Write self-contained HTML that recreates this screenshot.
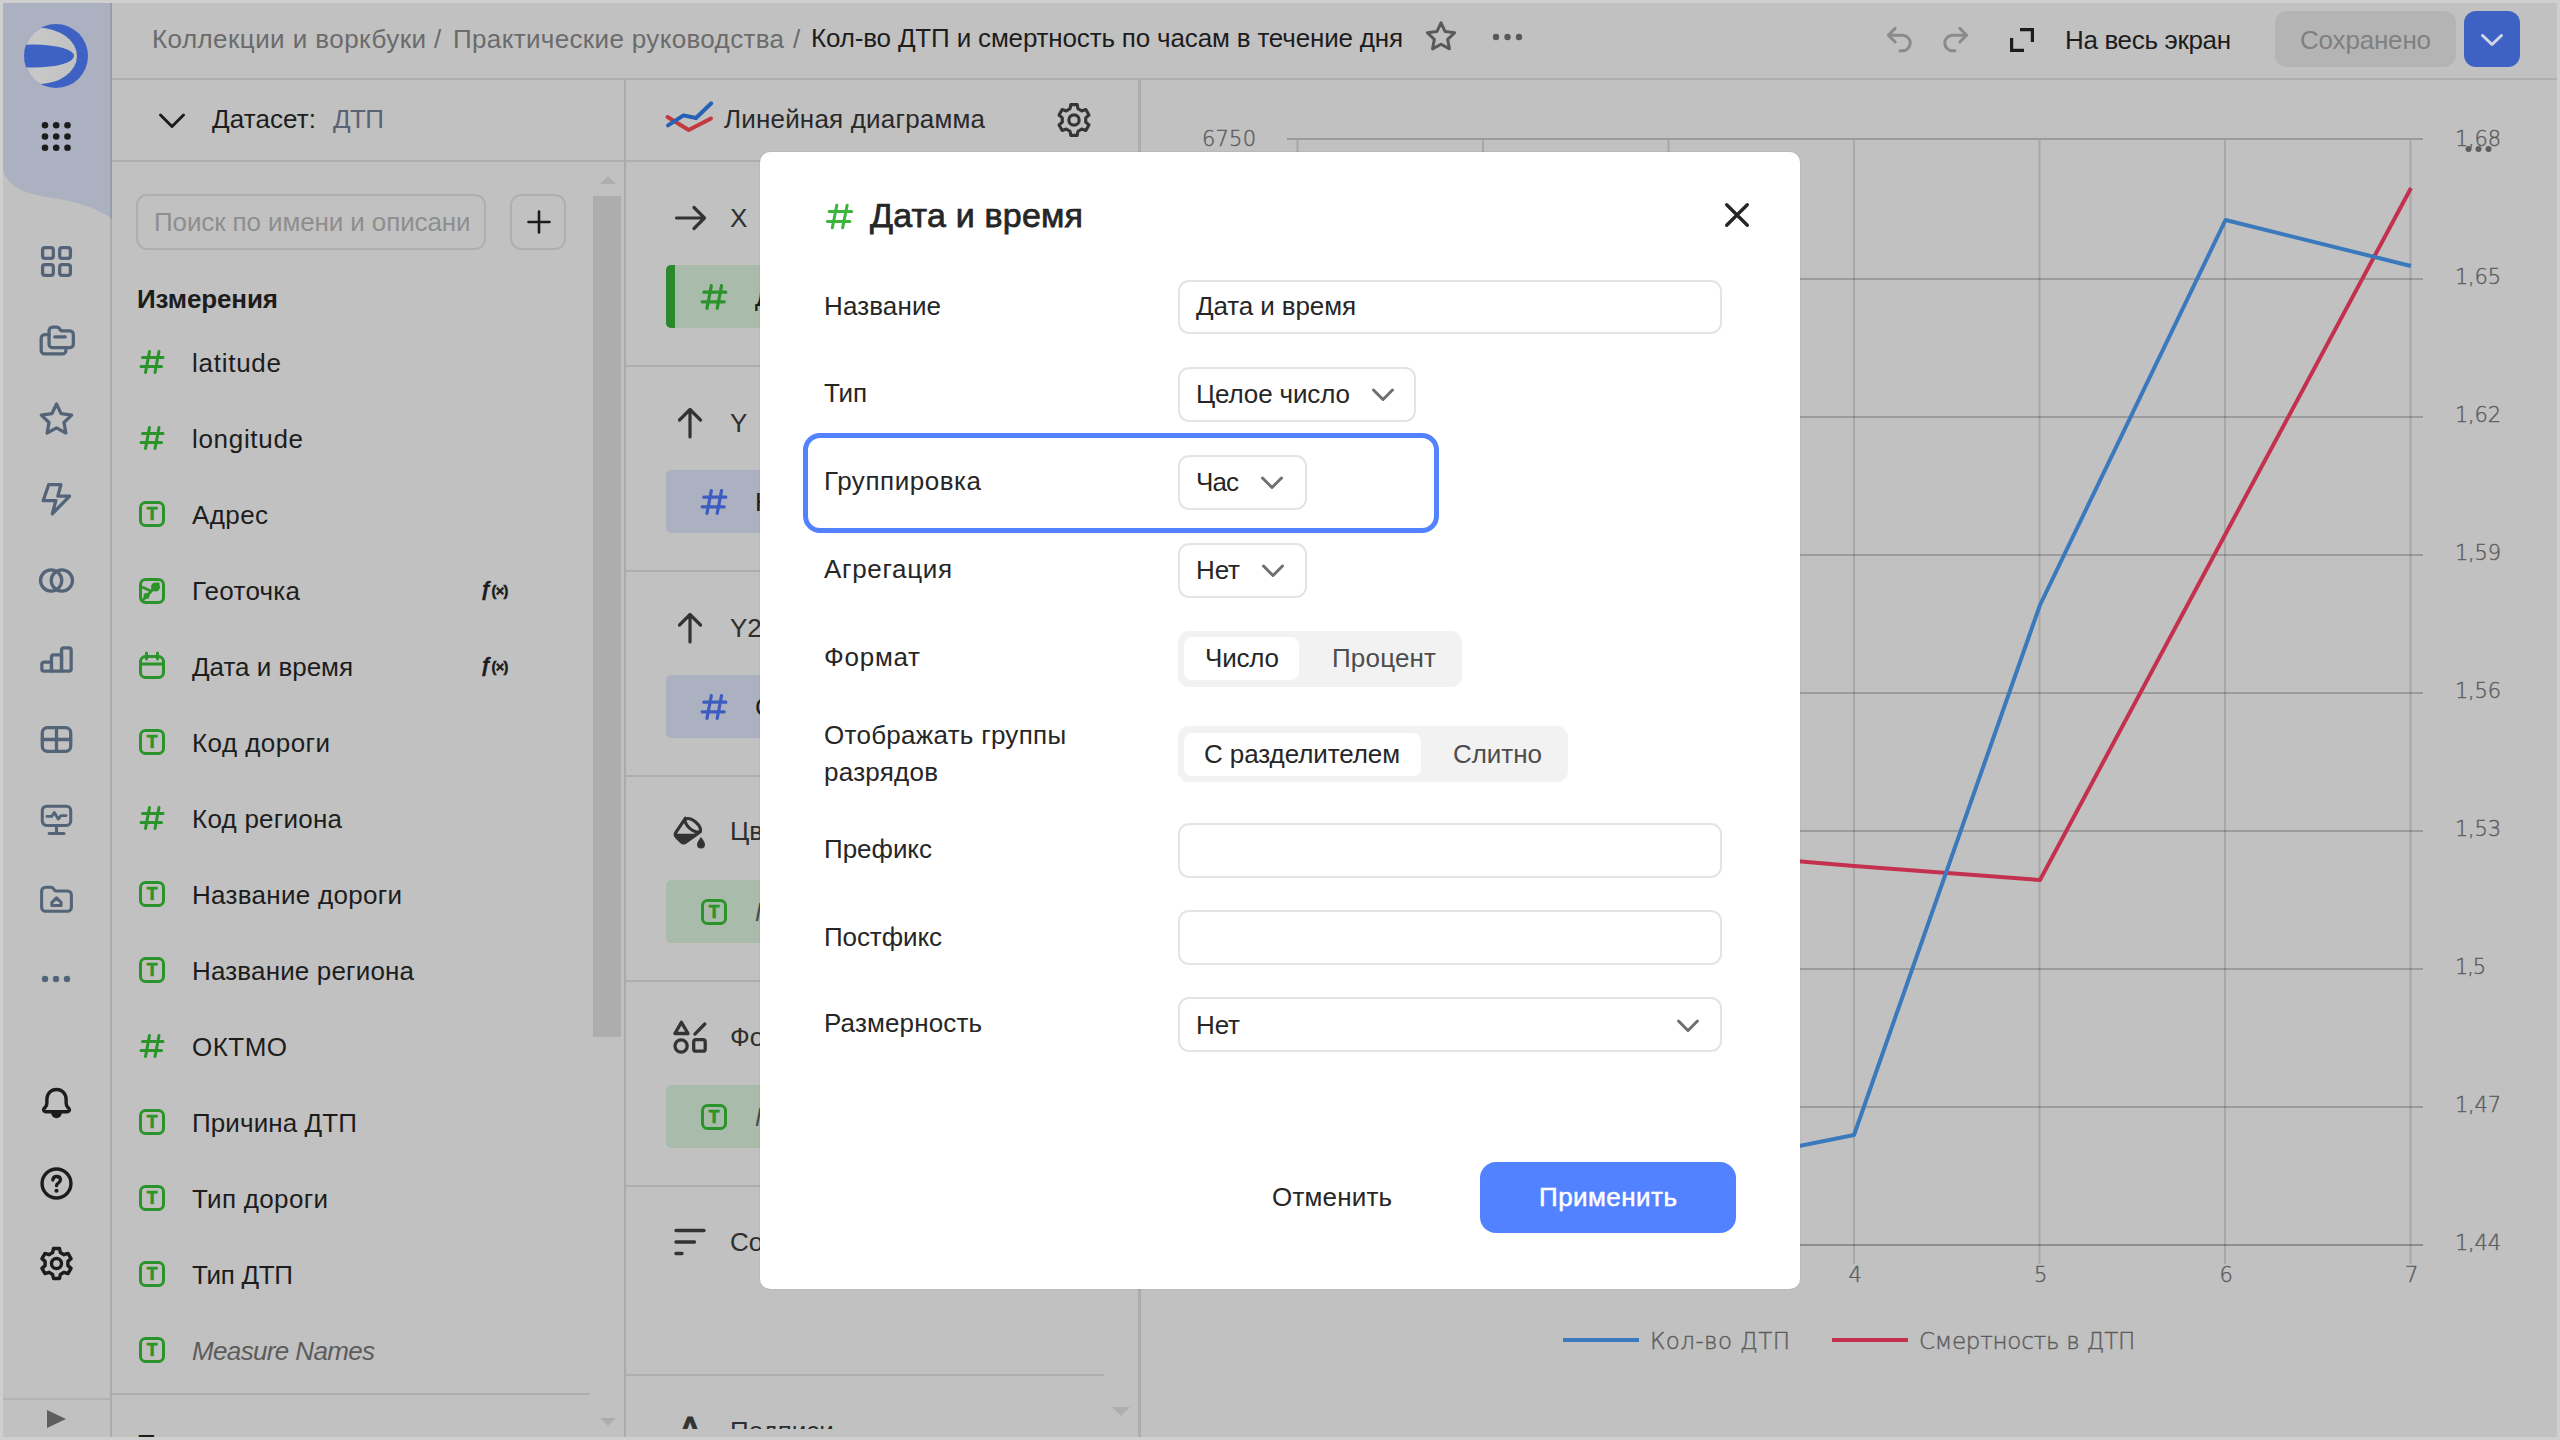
<!DOCTYPE html>
<html lang="ru"><head><meta charset="utf-8"><title>Кол-во ДТП и смертность по часам в течение дня</title>
<style>
*{box-sizing:border-box;margin:0;padding:0}
html,body{width:2560px;height:1440px;overflow:hidden;background:#cfcfcf}
body{font-family:"Liberation Sans",sans-serif;position:relative}
#app{position:absolute;left:3px;top:3px;width:2554px;height:1434px;overflow:hidden;background:#c1c1c1}
#w{position:absolute;left:-3px;top:-3px;width:2560px;height:1440px}
.b{position:absolute;display:block}
.t{position:absolute;white-space:nowrap}
svg{overflow:visible}
</style></head><body><div id="app"><div id="w">
<svg class="b" style="left:3px;top:3px" width="109" height="220" viewBox="0 0 109 220"><path d="M0 0H109V216C95 205 75 199 50 195C25 191 8 187 0 168Z" fill="#acb1c1"/></svg>
<div class="b" style="left:110px;top:3px;width:2px;height:1434px;background:rgba(0,0,0,.115)"></div>
<svg class="b" style="left:24px;top:24px" width="64" height="64" viewBox="0 0 64 64">
<defs><linearGradient id="lg" x1="0" y1="0" x2="1" y2="0"><stop offset="0" stop-color="#b4b9c6"/><stop offset=".45" stop-color="#c8c8c8"/><stop offset="1" stop-color="#c2c2c2"/></linearGradient>
<clipPath id="lc"><circle cx="32" cy="32" r="32"/></clipPath></defs>
<circle cx="32" cy="32" r="32" fill="#3d62c4"/>
<g clip-path="url(#lc)"><ellipse cx="14" cy="32" rx="39" ry="28.200" fill="url(#lg)"/>
<ellipse cx="10" cy="32" rx="40" ry="11.5" fill="#3d62c4"/></g></svg>
<svg class="b" style="left:0;top:0" width="112" height="170" viewBox="0 0 112 170" fill="#1c1c1c"><circle cx="45" cy="125.3" r="3.3"/><circle cx="56.2" cy="125.3" r="3.3"/><circle cx="67.5" cy="125.3" r="3.3"/><circle cx="45" cy="136.5" r="3.3"/><circle cx="56.2" cy="136.5" r="3.3"/><circle cx="67.5" cy="136.5" r="3.3"/><circle cx="45" cy="147.7" r="3.3"/><circle cx="56.2" cy="147.7" r="3.3"/><circle cx="67.5" cy="147.7" r="3.3"/></svg>
<svg class="b" style="left:38.5px;top:243.5px" width="35" height="35" viewBox="0 0 16 16" fill="none" stroke="#536478" stroke-width="1.5" stroke-linecap="round" stroke-linejoin="round"><rect x="1.650" y="1.650" width="4.900" height="4.900" rx="1.100"/><rect x="9.450" y="1.650" width="4.900" height="4.900" rx="1.100"/><rect x="1.650" y="9.450" width="4.900" height="4.900" rx="1.100"/><rect x="9.450" y="9.450" width="4.900" height="4.900" rx="1.100"/></svg>
<svg class="b" style="left:38.5px;top:322.5px" width="35" height="35" viewBox="0 0 16 16" fill="none" stroke="#536478" stroke-width="1.5" stroke-linecap="round" stroke-linejoin="round"><path d="M4.600 4.600V3.500a1.600 1.600 0 0 1 1.600-1.600h1.900c.500 0 .900.200 1.200.600l.500.700c.200.300.500.400.800.400h3.500a1.600 1.600 0 0 1 1.600 1.600v4.500a1.600 1.600 0 0 1-1.600 1.600H6.200a1.600 1.600 0 0 1-1.600-1.600z"/><path d="M4.600 5.300H2.600A1.600 1.600 0 0 0 1 6.900v5.650a1.600 1.600 0 0 0 1.600 1.600h8.100a1.600 1.600 0 0 0 1.600-1.600V11.500"/><path d="M7.200 6.300h4.800"/></svg>
<svg class="b" style="left:38.5px;top:400.5px" width="35" height="35" viewBox="0 0 16 16" fill="none" stroke="#536478" stroke-width="1.5" stroke-linecap="round" stroke-linejoin="round"><polygon points="8.00,1.40 10.12,5.79 14.94,6.44 11.42,9.81 12.29,14.61 8.00,12.30 3.71,14.61 4.58,9.81 1.06,6.44 5.88,5.79"/></svg>
<svg class="b" style="left:38.5px;top:480.5px" width="35" height="35" viewBox="0 0 16 16" fill="none" stroke="#536478" stroke-width="1.5" stroke-linecap="round" stroke-linejoin="round"><path d="M4.400 1.700H10L8.600 6.900H14L6.100 15L7.700 9H1.900Z"/></svg>
<svg class="b" style="left:38.5px;top:562.5px" width="35" height="35" viewBox="0 0 16 16" fill="none" stroke="#536478" stroke-width="1.5" stroke-linecap="round" stroke-linejoin="round"><circle cx="5.550" cy="8" r="4.850"/><circle cx="10.450" cy="8" r="4.850"/></svg>
<svg class="b" style="left:38.5px;top:641.5px" width="35" height="35" viewBox="0 0 16 16" fill="none" stroke="#536478" stroke-width="1.5" stroke-linecap="round" stroke-linejoin="round"><path d="M1.300 10.200a1 1 0 0 1 1-1h3.400v4.100H2.300a1 1 0 0 1-1-1z"/><path d="M5.700 6.850a1 1 0 0 1 1-1h3.600v7.450H5.700z"/><path d="M10.300 3.700a1 1 0 0 1 1-1h2.400a1 1 0 0 1 1 1v8.600a1 1 0 0 1-1 1h-3.400z"/></svg>
<svg class="b" style="left:38.5px;top:721.5px" width="35" height="35" viewBox="0 0 16 16" fill="none" stroke="#536478" stroke-width="1.5" stroke-linecap="round" stroke-linejoin="round"><rect x="1.500" y="2.600" width="13" height="10.800" rx="2.300"/><path d="M8 2.600v10.800M1.500 8h13"/></svg>
<svg class="b" style="left:38.5px;top:801.5px" width="35" height="35" viewBox="0 0 16 16" fill="none" stroke="#536478" stroke-width="1.4" stroke-linecap="round" stroke-linejoin="round"><rect x="1.500" y="1.900" width="13" height="8.800" rx="2"/><path d="M8 10.8v3.2M4.6 14.4h6.8"/><path d="M3.6 6.6h2.2l1.2-1.8 1.8 3 1.2-1.6h2.4" stroke-width="1.3"/></svg>
<svg class="b" style="left:38.5px;top:881.5px" width="35" height="35" viewBox="0 0 16 16" fill="none" stroke="#536478" stroke-width="1.4" stroke-linecap="round" stroke-linejoin="round"><path d="M1.2 4.2a1.8 1.8 0 0 1 1.8-1.8h2.3c.5 0 1 .2 1.3.6l.5.7c.2.3.5.4.8.4H13a1.8 1.8 0 0 1 1.8 1.8v5.7a1.8 1.8 0 0 1-1.8 1.8H3a1.8 1.8 0 0 1-1.8-1.8z"/><path d="M5.9 10.7V9.3L8 7.3l2.1 2v1.4z" stroke-width="1.4"/></svg>
<svg class="b" style="left:40px;top:962px" width="32" height="32" viewBox="0 0 32 32" fill="#536478"><circle cx="5" cy="17" r="3.2"/><circle cx="16" cy="17" r="3.2"/><circle cx="27" cy="17" r="3.2"/></svg>
<svg class="b" style="left:38.5px;top:1085.5px" width="35" height="35" viewBox="0 0 16 16" fill="none" stroke="#1c1c1c" stroke-width="1.55" stroke-linecap="round" stroke-linejoin="round"><path d="M8 1.6c-2.6 0-4.4 2-4.4 4.5v1.8c0 .7-.3 1.4-.8 1.9l-.5.5c-.5.6-.1 1.5.7 1.5h10c.8 0 1.200-.9.7-1.500l-.5-.5c-.5-.5-.8-1.200-.8-1.900V6.100c0-2.500-1.800-4.500-4.400-4.500z"/><path d="M6 12.300c.200 1.200 1 1.900 2 1.900s1.800-.700 2-1.900z" fill="#1c1c1c" stroke-width="1"/></svg>
<svg class="b" style="left:38.5px;top:1165.5px" width="35" height="35" viewBox="0 0 16 16" fill="none" stroke="#1c1c1c" stroke-width="1.55" stroke-linecap="round" stroke-linejoin="round"><circle cx="8" cy="8" r="6.6"/><path d="M6.300 6.400c.100-1 .800-1.600 1.800-1.600 1 0 1.700.6 1.700 1.500 0 .7-.4 1.100-1 1.500-.5.300-.8.600-.8 1.200" stroke-width="1.500"/><circle cx="8" cy="11.300" r=".95" fill="#1c1c1c" stroke="none"/></svg>
<svg class="b" style="left:38.5px;top:1245.5px" width="35" height="35" viewBox="0 0 16 16" fill="none" stroke="#1c1c1c" stroke-width="1.55" stroke-linecap="round" stroke-linejoin="round"><path d="M6.23 3.00 L6.61 1.14 L9.39 1.14 L9.77 3.00 L11.44 3.97 L13.25 3.37 L14.64 5.77 L13.21 7.03 L13.21 8.97 L14.64 10.23 L13.25 12.63 L11.44 12.03 L9.77 13.00 L9.39 14.86 L6.61 14.86 L6.23 13.00 L4.56 12.03 L2.75 12.63 L1.36 10.23 L2.79 8.97 L2.79 7.03 L1.36 5.77 L2.75 3.37 L4.56 3.97Z"/><circle cx="8" cy="8" r="2.3"/></svg>
<div class="b" style="left:3px;top:1398px;width:108px;height:2px;background:#b3b3b3"></div>
<svg class="b" style="left:46px;top:1409px" width="22" height="20" viewBox="0 0 22 20"><path d="M1 1L20 10L1 19Z" fill="#5e5e5e"/></svg>
<div class="b" style="left:112px;top:78px;width:2445px;height:2px;background:#aeaeae"></div>
<div class="t " style="left:152px;top:22.0px;height:34px;line-height:34px;font-size:26px;color:#6b6b6b;letter-spacing:0.437px;">Коллекции и воркбуки</div>
<div class="t " style="left:434px;top:22.0px;height:34px;line-height:34px;font-size:26px;color:#6b6b6b;">/</div>
<div class="t " style="left:453px;top:22.0px;height:34px;line-height:34px;font-size:26px;color:#6b6b6b;letter-spacing:0.348px;">Практические руководства</div>
<div class="t " style="left:793px;top:22.0px;height:34px;line-height:34px;font-size:26px;color:#6b6b6b;">/</div>
<div class="t " style="left:811px;top:21.0px;height:34px;line-height:34px;font-size:26px;color:#1d1d1d;letter-spacing:-0.166px;">Кол-во ДТП и смертность по часам в течение дня</div>
<svg class="b" style="left:1425px;top:20px" width="32" height="32" viewBox="0 0 16 16" fill="none" stroke="#595959" stroke-width="1.5" stroke-linejoin="round"><polygon points="8.00,1.40 10.06,5.77 14.85,6.38 11.33,9.68 12.23,14.42 8.00,12.10 3.77,14.42 4.67,9.68 1.15,6.38 5.94,5.77"/></svg>
<svg class="b" style="left:1488px;top:28px" width="40" height="18" viewBox="0 0 40 18" fill="#595959"><circle cx="8" cy="9" r="3.2"/><circle cx="19.500" cy="9" r="3.2"/><circle cx="31" cy="9" r="3.2"/></svg>
<svg class="b" style="left:1884px;top:24px" width="32" height="32" viewBox="0 0 16 16" fill="none" stroke="#8a8a8a" stroke-width="1.5" stroke-linecap="round" stroke-linejoin="round"><path d="M5.600 2.200L2.200 5.600l3.400 3.400"/><path d="M2.600 5.600h6.600a3.900 3.900 0 0 1 0 7.800H8"/></svg>
<svg class="b" style="left:1939px;top:24px" width="32" height="32" viewBox="0 0 16 16" fill="none" stroke="#8a8a8a" stroke-width="1.5" stroke-linecap="round" stroke-linejoin="round"><path d="M10.400 2.200l3.400 3.400-3.400 3.400"/><path d="M13.400 5.600H6.800a3.900 3.900 0 0 0 0 7.800H8"/></svg>
<svg class="b" style="left:2008px;top:26px" width="28" height="28" viewBox="0 0 28 28" fill="none" stroke="#1c1c1c" stroke-width="3.200" stroke-linejoin="miter"><path d="M12 3.600H24.400V16"/><path d="M3.600 12V24.400H16"/></svg>
<div class="t " style="left:2065px;top:23.0px;height:34px;line-height:34px;font-size:26px;color:#1d1d1d;letter-spacing:-0.341px;">На весь экран</div>
<div class="b" style="left:2275px;top:11px;width:181px;height:56px;background:#b4b4b4;border-radius:12px"></div>
<div class="t " style="left:2300px;top:23.0px;height:34px;line-height:34px;font-size:26px;color:#808080;letter-spacing:-0.184px;">Сохранено</div>
<div class="b" style="left:2464px;top:11px;width:56px;height:56px;background:#3e62c4;border-radius:12px"></div>
<svg class="b" style="left:2480px;top:31px" width="24" height="18" viewBox="0 0 24 18" fill="none" stroke="#d2d6e4" stroke-width="3" stroke-linecap="round" stroke-linejoin="round"><path d="M2.500 4.500L12 13.500L21.500 4.500"/></svg>
<div class="b" style="left:112px;top:160px;width:1027px;height:2px;background:#aeaeae"></div>
<div class="b" style="left:624px;top:80px;width:2px;height:1357px;background:#ababab"></div>
<div class="b" style="left:1138px;top:80px;width:3px;height:1357px;background:#adadad"></div>
<svg class="b" style="left:158px;top:111px" width="28" height="20" viewBox="0 0 28 20" fill="none" stroke="#1c1c1c" stroke-width="3" stroke-linecap="round" stroke-linejoin="round"><path d="M2.500 4L14 15.500L25.500 4"/></svg>
<div class="t " style="left:212px;top:102.0px;height:34px;line-height:34px;font-size:26px;color:#1d1d1d;letter-spacing:0.105px;">Датасет:</div>
<div class="t " style="left:333px;top:102.0px;height:34px;line-height:34px;font-size:26px;color:#5a6273;letter-spacing:-0.586px;">ДТП</div>
<div class="b" style="left:136px;top:194px;width:350px;height:56px;border:2px solid #afafaf;border-radius:11px"></div>
<div class="t " style="left:154px;top:205.0px;height:34px;line-height:34px;font-size:26px;color:#8e8e8e;letter-spacing:-0.110px;width:315px;overflow:hidden;">Поиск по имени и описанию</div>
<div class="b" style="left:510px;top:194px;width:56px;height:56px;border:2px solid #afafaf;border-radius:11px"></div>
<svg class="b" style="left:526px;top:209px" width="26" height="26" viewBox="0 0 26 26" stroke="#1c1c1c" stroke-width="2.600" stroke-linecap="round"><path d="M13 2.500V23.500M2.500 13H23.500"/></svg>
<div class="b" style="left:593px;top:196px;width:28px;height:841px;background:#adadad"></div>
<svg class="b" style="left:598px;top:174px" width="20" height="12" viewBox="0 0 20 12"><path d="M10 2L18 10H2Z" fill="#aeaeae"/></svg>
<svg class="b" style="left:598px;top:1416px" width="20" height="12" viewBox="0 0 20 12"><path d="M10 10L18 2H2Z" fill="#aeaeae"/></svg>
<div class="t " style="left:137px;top:282.0px;height:34px;line-height:34px;font-size:26px;color:#1d1d1d;letter-spacing:-0.105px;font-weight:700;">Измерения</div>
<svg class="b" style="left:139.0px;top:349.0px" width="26" height="26" viewBox="0 0 26 26" fill="none" stroke="#2a942a" stroke-width="3" stroke-linecap="round"><path d="M10.500 2.500L6.500 23.500M20 2.500L16 23.500M3.500 8.500H24M2 17.500H22.500"/></svg>
<div class="t " style="left:192px;top:346.0px;height:34px;line-height:34px;font-size:26px;color:#1d1d1d;letter-spacing:0.741px;">latitude</div>
<svg class="b" style="left:139.0px;top:425.0px" width="26" height="26" viewBox="0 0 26 26" fill="none" stroke="#2a942a" stroke-width="3" stroke-linecap="round"><path d="M10.500 2.500L6.500 23.500M20 2.500L16 23.500M3.500 8.500H24M2 17.500H22.500"/></svg>
<div class="t " style="left:192px;top:422.0px;height:34px;line-height:34px;font-size:26px;color:#1d1d1d;letter-spacing:0.688px;">longitude</div>
<svg class="b" style="left:138px;top:500px" width="28" height="28" viewBox="0 0 28 28" fill="none" stroke="#2a942a" stroke-width="3"><rect x="2.500" y="2.500" width="23" height="23" rx="5"/><text x="14" y="20.300" text-anchor="middle" font-family="Liberation Sans, sans-serif" font-weight="700" font-size="17.500" fill="#2a942a" stroke="#2a942a" stroke-width=".7">T</text></svg>
<div class="t " style="left:192px;top:498.0px;height:34px;line-height:34px;font-size:26px;color:#1d1d1d;letter-spacing:0.395px;">Адрес</div>
<svg class="b" style="left:138px;top:577px" width="28" height="28" viewBox="0 0 28 28" fill="none" stroke="#2a942a" stroke-width="3"><rect x="2.500" y="2.500" width="23" height="23" rx="5"/><path d="M4 24L21 6M4 10L13 14" stroke-width="2.600"/><circle cx="17.500" cy="10" r="4.500" fill="#2a942a" stroke="none"/><circle cx="8.500" cy="19" r="3" fill="#2a942a" stroke="none"/></svg>
<div class="t " style="left:192px;top:574.0px;height:34px;line-height:34px;font-size:26px;color:#1d1d1d;letter-spacing:0.270px;">Геоточка</div>
<div class="t" style="left:480px;top:575px;height:28px;line-height:28px;font-size:20.500px;font-weight:700;font-style:italic;color:#1c1c1c;font-family:'Liberation Sans',sans-serif;-webkit-text-stroke:.3px #1c1c1c">ƒ<span style="font-size:14.500px;font-style:normal;position:relative;top:-.5px;letter-spacing:-.6px;margin-left:0px;-webkit-text-stroke:.5px #1c1c1c">(×)</span></div>
<svg class="b" style="left:138px;top:651px" width="28" height="30" viewBox="0 0 28 30" fill="none" stroke="#2a942a" stroke-width="3" stroke-linecap="round"><rect x="2.500" y="5.500" width="23" height="21" rx="5"/><path d="M2.500 13H25.500M8.500 2V8M19.500 2V8"/></svg>
<div class="t " style="left:192px;top:650.0px;height:34px;line-height:34px;font-size:26px;color:#1d1d1d;letter-spacing:-0.017px;">Дата и время</div>
<div class="t" style="left:480px;top:651px;height:28px;line-height:28px;font-size:20.500px;font-weight:700;font-style:italic;color:#1c1c1c;font-family:'Liberation Sans',sans-serif;-webkit-text-stroke:.3px #1c1c1c">ƒ<span style="font-size:14.500px;font-style:normal;position:relative;top:-.5px;letter-spacing:-.6px;margin-left:0px;-webkit-text-stroke:.5px #1c1c1c">(×)</span></div>
<svg class="b" style="left:138px;top:728px" width="28" height="28" viewBox="0 0 28 28" fill="none" stroke="#2a942a" stroke-width="3"><rect x="2.500" y="2.500" width="23" height="23" rx="5"/><text x="14" y="20.300" text-anchor="middle" font-family="Liberation Sans, sans-serif" font-weight="700" font-size="17.500" fill="#2a942a" stroke="#2a942a" stroke-width=".7">T</text></svg>
<div class="t " style="left:192px;top:726.0px;height:34px;line-height:34px;font-size:26px;color:#1d1d1d;letter-spacing:0.450px;">Код дороги</div>
<svg class="b" style="left:139.0px;top:805.0px" width="26" height="26" viewBox="0 0 26 26" fill="none" stroke="#2a942a" stroke-width="3" stroke-linecap="round"><path d="M10.500 2.500L6.500 23.500M20 2.500L16 23.500M3.500 8.500H24M2 17.500H22.500"/></svg>
<div class="t " style="left:192px;top:802.0px;height:34px;line-height:34px;font-size:26px;color:#1d1d1d;letter-spacing:0.241px;">Код региона</div>
<svg class="b" style="left:138px;top:880px" width="28" height="28" viewBox="0 0 28 28" fill="none" stroke="#2a942a" stroke-width="3"><rect x="2.500" y="2.500" width="23" height="23" rx="5"/><text x="14" y="20.300" text-anchor="middle" font-family="Liberation Sans, sans-serif" font-weight="700" font-size="17.500" fill="#2a942a" stroke="#2a942a" stroke-width=".7">T</text></svg>
<div class="t " style="left:192px;top:878.0px;height:34px;line-height:34px;font-size:26px;color:#1d1d1d;letter-spacing:0.290px;">Название дороги</div>
<svg class="b" style="left:138px;top:956px" width="28" height="28" viewBox="0 0 28 28" fill="none" stroke="#2a942a" stroke-width="3"><rect x="2.500" y="2.500" width="23" height="23" rx="5"/><text x="14" y="20.300" text-anchor="middle" font-family="Liberation Sans, sans-serif" font-weight="700" font-size="17.500" fill="#2a942a" stroke="#2a942a" stroke-width=".7">T</text></svg>
<div class="t " style="left:192px;top:954.0px;height:34px;line-height:34px;font-size:26px;color:#1d1d1d;letter-spacing:0.161px;">Название региона</div>
<svg class="b" style="left:139.0px;top:1033.0px" width="26" height="26" viewBox="0 0 26 26" fill="none" stroke="#2a942a" stroke-width="3" stroke-linecap="round"><path d="M10.500 2.500L6.500 23.500M20 2.500L16 23.500M3.500 8.500H24M2 17.500H22.500"/></svg>
<div class="t " style="left:192px;top:1030.0px;height:34px;line-height:34px;font-size:26px;color:#1d1d1d;letter-spacing:0.473px;">ОКТМО</div>
<svg class="b" style="left:138px;top:1108px" width="28" height="28" viewBox="0 0 28 28" fill="none" stroke="#2a942a" stroke-width="3"><rect x="2.500" y="2.500" width="23" height="23" rx="5"/><text x="14" y="20.300" text-anchor="middle" font-family="Liberation Sans, sans-serif" font-weight="700" font-size="17.500" fill="#2a942a" stroke="#2a942a" stroke-width=".7">T</text></svg>
<div class="t " style="left:192px;top:1106.0px;height:34px;line-height:34px;font-size:26px;color:#1d1d1d;letter-spacing:0.105px;">Причина ДТП</div>
<svg class="b" style="left:138px;top:1184px" width="28" height="28" viewBox="0 0 28 28" fill="none" stroke="#2a942a" stroke-width="3"><rect x="2.500" y="2.500" width="23" height="23" rx="5"/><text x="14" y="20.300" text-anchor="middle" font-family="Liberation Sans, sans-serif" font-weight="700" font-size="17.500" fill="#2a942a" stroke="#2a942a" stroke-width=".7">T</text></svg>
<div class="t " style="left:192px;top:1182.0px;height:34px;line-height:34px;font-size:26px;color:#1d1d1d;letter-spacing:0.321px;">Тип дороги</div>
<svg class="b" style="left:138px;top:1260px" width="28" height="28" viewBox="0 0 28 28" fill="none" stroke="#2a942a" stroke-width="3"><rect x="2.500" y="2.500" width="23" height="23" rx="5"/><text x="14" y="20.300" text-anchor="middle" font-family="Liberation Sans, sans-serif" font-weight="700" font-size="17.500" fill="#2a942a" stroke="#2a942a" stroke-width=".7">T</text></svg>
<div class="t " style="left:192px;top:1258.0px;height:34px;line-height:34px;font-size:26px;color:#1d1d1d;letter-spacing:-0.289px;">Тип ДТП</div>
<svg class="b" style="left:138px;top:1336px" width="28" height="28" viewBox="0 0 28 28" fill="none" stroke="#2a942a" stroke-width="3"><rect x="2.500" y="2.500" width="23" height="23" rx="5"/><text x="14" y="20.300" text-anchor="middle" font-family="Liberation Sans, sans-serif" font-weight="700" font-size="17.500" fill="#2a942a" stroke="#2a942a" stroke-width=".7">T</text></svg>
<div class="t " style="left:192px;top:1334.0px;height:34px;line-height:34px;font-size:26px;color:#5c5c5c;letter-spacing:-0.641px;font-style:italic;">Measure Names</div>
<div class="b" style="left:112px;top:1393px;width:478px;height:2px;background:#aeaeae"></div>
<div class="t " style="left:137px;top:1427.0px;height:34px;line-height:34px;font-size:26px;color:#1d1d1d;letter-spacing:0.326px;font-weight:700;">Показатели</div>
<svg class="b" style="left:664px;top:98px" width="50" height="40" viewBox="0 0 50 40" fill="none" stroke-width="4" stroke-linecap="round" stroke-linejoin="round"><path d="M3.500 19L24.700 32L47 20.500" stroke="#c2393f"/><path d="M4 27.400L19.500 17.400L32 20L47.300 5.300" stroke="#2761b5"/></svg>
<div class="t " style="left:724px;top:102.0px;height:34px;line-height:34px;font-size:26px;color:#2a2a2a;letter-spacing:0.188px;">Линейная диаграмма</div>
<svg class="b" style="left:1056px;top:102px" width="36" height="36" viewBox="0 0 16 16" fill="none" stroke="#353535" stroke-width="1.400" stroke-linejoin="round"><path d="M6.23 3.00 L6.61 1.14 L9.39 1.14 L9.77 3.00 L11.44 3.97 L13.25 3.37 L14.64 5.77 L13.21 7.03 L13.21 8.97 L14.64 10.23 L13.25 12.63 L11.44 12.03 L9.77 13.00 L9.39 14.86 L6.61 14.86 L6.23 13.00 L4.56 12.03 L2.75 12.63 L1.36 10.23 L2.79 8.97 L2.79 7.03 L1.36 5.77 L2.75 3.37 L4.56 3.97Z"/><circle cx="8" cy="8" r="2.3"/></svg>
<svg class="b" style="left:673px;top:201px" width="34" height="34" viewBox="0 0 34 34" fill="none" stroke="#333333" stroke-width="3.200" stroke-linecap="round" stroke-linejoin="round"><path d="M3.500 17H31M21 6.500L31.500 17L21 27.500"/></svg>
<div class="t " style="left:730px;top:201.0px;height:34px;line-height:34px;font-size:26px;color:#2e2e2e;">X</div>
<div class="b" style="left:666px;top:265px;width:444px;height:63px;background:#a9bbaa;border-radius:5px"></div>
<div class="b" style="left:666px;top:265px;width:9px;height:63px;background:#2c882c;border-radius:5px 0 0 5px"></div>
<svg class="b" style="left:700.0px;top:283.0px" width="28" height="28" viewBox="0 0 26 26" fill="none" stroke="#2a942a" stroke-width="3" stroke-linecap="round"><path d="M10.500 2.500L6.500 23.500M20 2.500L16 23.500M3.500 8.500H24M2 17.500H22.500"/></svg>
<div class="t " style="left:755px;top:280.0px;height:34px;line-height:34px;font-size:26px;color:#1d1d1d;">Дата и время</div>
<div class="b" style="left:626px;top:365px;width:512px;height:2px;background:#aeaeae"></div>
<svg class="b" style="left:673px;top:406px" width="34" height="34" viewBox="0 0 34 34" fill="none" stroke="#333333" stroke-width="3.200" stroke-linecap="round" stroke-linejoin="round"><path d="M17 31V4M6.500 14L17 3.500L27.500 14"/></svg>
<div class="t " style="left:730px;top:406.0px;height:34px;line-height:34px;font-size:26px;color:#2e2e2e;">Y</div>
<div class="b" style="left:666px;top:470px;width:444px;height:63px;background:#acb1c1;border-radius:5px"></div>
<svg class="b" style="left:700.0px;top:488.0px" width="28" height="28" viewBox="0 0 26 26" fill="none" stroke="#3d5cc0" stroke-width="3" stroke-linecap="round"><path d="M10.500 2.500L6.500 23.500M20 2.500L16 23.500M3.500 8.500H24M2 17.500H22.500"/></svg>
<div class="t " style="left:755px;top:485.0px;height:34px;line-height:34px;font-size:26px;color:#1d1d1d;">Кол-во ДТП</div>
<div class="b" style="left:626px;top:570px;width:512px;height:2px;background:#aeaeae"></div>
<svg class="b" style="left:673px;top:611px" width="34" height="34" viewBox="0 0 34 34" fill="none" stroke="#333333" stroke-width="3.200" stroke-linecap="round" stroke-linejoin="round"><path d="M17 31V4M6.500 14L17 3.500L27.500 14"/></svg>
<div class="t " style="left:730px;top:611.0px;height:34px;line-height:34px;font-size:26px;color:#2e2e2e;">Y2</div>
<div class="b" style="left:666px;top:675px;width:444px;height:63px;background:#acb1c1;border-radius:5px"></div>
<svg class="b" style="left:700.0px;top:693.0px" width="28" height="28" viewBox="0 0 26 26" fill="none" stroke="#3d5cc0" stroke-width="3" stroke-linecap="round"><path d="M10.500 2.500L6.500 23.500M20 2.500L16 23.500M3.500 8.500H24M2 17.500H22.500"/></svg>
<div class="t " style="left:755px;top:690.0px;height:34px;line-height:34px;font-size:26px;color:#1d1d1d;">Смертность в ДТП</div>
<div class="b" style="left:626px;top:775px;width:512px;height:2px;background:#aeaeae"></div>
<svg class="b" style="left:673px;top:814px" width="34" height="34" viewBox="0 0 34 34" fill="none" stroke="#333333" stroke-width="3.200" stroke-linecap="round" stroke-linejoin="round"><path d="M12.300 4.300L2.900 18.300Q1.300 20.800 3.400 23L8.300 27.800Q10.500 29.800 13 28L27.300 17.800" stroke-width="3.200"/><ellipse cx="19.800" cy="11.300" rx="9.300" ry="4.300" transform="rotate(40 19.800 11.300)" stroke-width="3.100"/><path d="M2.300 19.750H20.750L27.300 17.800L13 28Q10.500 29.800 8.300 27.800L3.400 23Q1.800 21.300 2.300 19.750Z" fill="#333333" stroke="none"/><path d="M28 23C30 26 32 28.200 32 30.500a4 4 0 0 1-8 0C24 28.200 26 26 28 23Z" fill="#333333" stroke="none"/></svg>
<div class="t " style="left:730px;top:814.0px;height:34px;line-height:34px;font-size:26px;color:#2e2e2e;">Цвета</div>
<div class="b" style="left:666px;top:880px;width:444px;height:63px;background:#a9bbaa;border-radius:5px"></div>
<svg class="b" style="left:700px;top:898px" width="28" height="28" viewBox="0 0 28 28" fill="none" stroke="#2a942a" stroke-width="3"><rect x="2.500" y="2.500" width="23" height="23" rx="5"/><text x="14" y="20.300" text-anchor="middle" font-family="Liberation Sans, sans-serif" font-weight="700" font-size="17.500" fill="#2a942a" stroke="#2a942a" stroke-width=".7">T</text></svg>
<div class="t " style="left:755px;top:895.0px;height:34px;line-height:34px;font-size:26px;color:#4a4a4a;font-style:italic;">Measure Names</div>
<div class="b" style="left:626px;top:980px;width:512px;height:2px;background:#aeaeae"></div>
<svg class="b" style="left:673px;top:1020px" width="34" height="34" viewBox="0 0 34 34" fill="none" stroke="#333333" stroke-width="3.200" stroke-linecap="round" stroke-linejoin="round"><path d="M8.400 2.300L15 13.500H1.900Z" stroke-width="3.300"/><circle cx="8.100" cy="26" r="6.100" stroke-width="3.300"/><rect x="20.700" y="19.700" width="11.500" height="11.500" rx="2.300" stroke-width="3.300"/><path d="M21.900 14.100L31.800 4"  stroke-width="3.300"/></svg>
<div class="t " style="left:730px;top:1020.0px;height:34px;line-height:34px;font-size:26px;color:#2e2e2e;">Форма</div>
<div class="b" style="left:666px;top:1085px;width:444px;height:63px;background:#a9bbaa;border-radius:5px"></div>
<svg class="b" style="left:700px;top:1103px" width="28" height="28" viewBox="0 0 28 28" fill="none" stroke="#2a942a" stroke-width="3"><rect x="2.500" y="2.500" width="23" height="23" rx="5"/><text x="14" y="20.300" text-anchor="middle" font-family="Liberation Sans, sans-serif" font-weight="700" font-size="17.500" fill="#2a942a" stroke="#2a942a" stroke-width=".7">T</text></svg>
<div class="t " style="left:755px;top:1100.0px;height:34px;line-height:34px;font-size:26px;color:#4a4a4a;font-style:italic;">Measure Names</div>
<div class="b" style="left:626px;top:1185px;width:512px;height:2px;background:#aeaeae"></div>
<svg class="b" style="left:673px;top:1225px" width="34" height="34" viewBox="0 0 34 34" fill="none" stroke="#333333" stroke-width="3.200" stroke-linecap="round" stroke-linejoin="round"><path d="M3 5.500H31M3 17H21.500M3 28.500H9" stroke-width="3.400"/></svg>
<div class="t " style="left:730px;top:1225.0px;height:34px;line-height:34px;font-size:26px;color:#2e2e2e;">Сортировка</div>
<div class="b" style="left:626px;top:1374px;width:478px;height:2px;background:#aeaeae"></div>
<svg class="b" style="left:673px;top:1414px" width="34" height="34" viewBox="0 0 34 34" fill="none" stroke="#333333" stroke-width="3.200" stroke-linecap="round" stroke-linejoin="round"><text x="17" y="34" text-anchor="middle" font-family="Liberation Sans, sans-serif" font-size="44" fill="#333" stroke="#333" stroke-width=".8">A</text></svg>
<div class="t " style="left:730px;top:1414.0px;height:34px;line-height:34px;font-size:26px;color:#2e2e2e;">Подписи</div>
<div class="b" style="left:626px;top:1429px;width:512px;height:8px;background:#c1c1c1"></div>
<svg class="b" style="left:1110px;top:1404px" width="22" height="14" viewBox="0 0 22 14"><path d="M11 12L20 3H2Z" fill="#aeaeae"/></svg>
<svg class="b" style="left:0;top:0" width="2560" height="1440" viewBox="0 0 2560 1440"><rect x="1287" y="138" width="1136" height="2" fill="#9b9b9b"/><rect x="1287" y="278" width="1136" height="2" fill="#9b9b9b"/><rect x="1287" y="416" width="1136" height="2" fill="#9b9b9b"/><rect x="1287" y="554" width="1136" height="2" fill="#9b9b9b"/><rect x="1287" y="692" width="1136" height="2" fill="#9b9b9b"/><rect x="1287" y="830" width="1136" height="2" fill="#9b9b9b"/><rect x="1287" y="968" width="1136" height="2" fill="#9b9b9b"/><rect x="1287" y="1106" width="1136" height="2" fill="#9b9b9b"/><rect x="1287" y="1244" width="1136" height="2" fill="#8e8e8e"/><rect x="1296.5" y="140" width="2" height="1124" fill="#000" fill-opacity=".13"/><rect x="1482.0" y="140" width="2" height="1124" fill="#000" fill-opacity=".13"/><rect x="1667.5" y="140" width="2" height="1124" fill="#000" fill-opacity=".13"/><rect x="1853.0" y="140" width="2" height="1124" fill="#000" fill-opacity=".13"/><rect x="2038.5" y="140" width="2" height="1124" fill="#000" fill-opacity=".13"/><rect x="2224.0" y="140" width="2" height="1124" fill="#000" fill-opacity=".13"/><rect x="2409.5" y="140" width="2" height="1124" fill="#000" fill-opacity=".13"/><polyline fill="none" stroke="#c4314f" stroke-width="4" stroke-linejoin="round" points="1298,800 1483,830 1669,850 1854,866 2040,880 2225.5,534 2411,188"/><polyline fill="none" stroke="#3b79bd" stroke-width="4" stroke-linejoin="round" points="1298,700 1483,1000 1669,1172 1854,1135 2040,605 2225.5,220 2411,266"/><rect x="1563" y="1338" width="76" height="4" fill="#3b79bd"/><rect x="1832" y="1338" width="76" height="4" fill="#c4314f"/></svg>
<div class="t " style="left:1202px;top:125.5px;height:27px;line-height:27px;font-size:21px;color:#5c5c5c;letter-spacing:0.188px;font-family:'DejaVu Sans','Liberation Sans',sans-serif;font-weight:200;-webkit-text-stroke:.4px #5c5c5c;">6750</div>
<div class="t " style="left:2455px;top:125.5px;height:27px;line-height:27px;font-size:21px;color:#5c5c5c;letter-spacing:-0.250px;font-family:'DejaVu Sans','Liberation Sans',sans-serif;font-weight:200;-webkit-text-stroke:.4px #5c5c5c;">1,68</div>
<div class="t " style="left:2455px;top:263.5px;height:27px;line-height:27px;font-size:21px;color:#5c5c5c;letter-spacing:-0.250px;font-family:'DejaVu Sans','Liberation Sans',sans-serif;font-weight:200;-webkit-text-stroke:.4px #5c5c5c;">1,65</div>
<div class="t " style="left:2455px;top:401.5px;height:27px;line-height:27px;font-size:21px;color:#5c5c5c;letter-spacing:-0.250px;font-family:'DejaVu Sans','Liberation Sans',sans-serif;font-weight:200;-webkit-text-stroke:.4px #5c5c5c;">1,62</div>
<div class="t " style="left:2455px;top:539.5px;height:27px;line-height:27px;font-size:21px;color:#5c5c5c;letter-spacing:-0.250px;font-family:'DejaVu Sans','Liberation Sans',sans-serif;font-weight:200;-webkit-text-stroke:.4px #5c5c5c;">1,59</div>
<div class="t " style="left:2455px;top:677.5px;height:27px;line-height:27px;font-size:21px;color:#5c5c5c;letter-spacing:-0.250px;font-family:'DejaVu Sans','Liberation Sans',sans-serif;font-weight:200;-webkit-text-stroke:.4px #5c5c5c;">1,56</div>
<div class="t " style="left:2455px;top:815.5px;height:27px;line-height:27px;font-size:21px;color:#5c5c5c;letter-spacing:-0.250px;font-family:'DejaVu Sans','Liberation Sans',sans-serif;font-weight:200;-webkit-text-stroke:.4px #5c5c5c;">1,53</div>
<div class="t " style="left:2455px;top:953.5px;height:27px;line-height:27px;font-size:21px;color:#5c5c5c;letter-spacing:-1.195px;font-family:'DejaVu Sans','Liberation Sans',sans-serif;font-weight:200;-webkit-text-stroke:.4px #5c5c5c;">1,5</div>
<div class="t " style="left:2455px;top:1091.5px;height:27px;line-height:27px;font-size:21px;color:#5c5c5c;letter-spacing:-0.250px;font-family:'DejaVu Sans','Liberation Sans',sans-serif;font-weight:200;-webkit-text-stroke:.4px #5c5c5c;">1,47</div>
<div class="t " style="left:2455px;top:1229.5px;height:27px;line-height:27px;font-size:21px;color:#5c5c5c;letter-spacing:-0.250px;font-family:'DejaVu Sans','Liberation Sans',sans-serif;font-weight:200;-webkit-text-stroke:.4px #5c5c5c;">1,44</div>
<div class="t " style="left:1292.0px;top:1261.5px;height:27px;line-height:27px;font-size:21px;color:#5c5c5c;font-family:'DejaVu Sans','Liberation Sans',sans-serif;font-weight:200;-webkit-text-stroke:.4px #5c5c5c;">1</div>
<div class="t " style="left:1477.5px;top:1261.5px;height:27px;line-height:27px;font-size:21px;color:#5c5c5c;font-family:'DejaVu Sans','Liberation Sans',sans-serif;font-weight:200;-webkit-text-stroke:.4px #5c5c5c;">2</div>
<div class="t " style="left:1663.0px;top:1261.5px;height:27px;line-height:27px;font-size:21px;color:#5c5c5c;font-family:'DejaVu Sans','Liberation Sans',sans-serif;font-weight:200;-webkit-text-stroke:.4px #5c5c5c;">3</div>
<div class="t " style="left:1848.5px;top:1261.5px;height:27px;line-height:27px;font-size:21px;color:#5c5c5c;font-family:'DejaVu Sans','Liberation Sans',sans-serif;font-weight:200;-webkit-text-stroke:.4px #5c5c5c;">4</div>
<div class="t " style="left:2034.0px;top:1261.5px;height:27px;line-height:27px;font-size:21px;color:#5c5c5c;font-family:'DejaVu Sans','Liberation Sans',sans-serif;font-weight:200;-webkit-text-stroke:.4px #5c5c5c;">5</div>
<div class="t " style="left:2219.5px;top:1261.5px;height:27px;line-height:27px;font-size:21px;color:#5c5c5c;font-family:'DejaVu Sans','Liberation Sans',sans-serif;font-weight:200;-webkit-text-stroke:.4px #5c5c5c;">6</div>
<div class="t " style="left:2405.0px;top:1261.5px;height:27px;line-height:27px;font-size:21px;color:#5c5c5c;font-family:'DejaVu Sans','Liberation Sans',sans-serif;font-weight:200;-webkit-text-stroke:.4px #5c5c5c;">7</div>
<div class="t " style="left:1650px;top:1325.5px;height:30px;line-height:30px;font-size:23px;color:#5c5c5c;letter-spacing:0.370px;font-family:'DejaVu Sans','Liberation Sans',sans-serif;font-weight:200;-webkit-text-stroke:.4px #5c5c5c;">Кол-во ДТП</div>
<div class="t " style="left:1919px;top:1325.5px;height:30px;line-height:30px;font-size:23px;color:#5c5c5c;letter-spacing:-0.250px;font-family:'DejaVu Sans','Liberation Sans',sans-serif;font-weight:200;-webkit-text-stroke:.4px #5c5c5c;">Смертность в ДТП</div>
<svg class="b" style="left:2462px;top:143px" width="34" height="12" viewBox="0 0 34 12" fill="#5e5e5e"><circle cx="6.500" cy="6" r="3"/><circle cx="16.500" cy="6" r="3"/><circle cx="26.500" cy="6" r="3"/></svg>
<div class="b" style="left:760px;top:152px;width:1040px;height:1137px;background:#fff;border-radius:10px;box-shadow:0 0 0 1px rgba(0,0,0,.04)"></div>
<svg class="b" style="left:825px;top:203px" width="29" height="27" viewBox="0 0 32 30" fill="none" stroke="#3cb53c" stroke-width="3.400" stroke-linecap="round"><path d="M13 2.500L8 27.500M24.500 2.500L19.500 27.500M4.500 9.500H29.500M2.500 20.500H27.500"/></svg>
<div class="t " style="left:870px;top:193.0px;height:44px;line-height:44px;font-size:34px;color:#262626;letter-spacing:0.195px;-webkit-text-stroke:.75px #262626;">Дата и время</div>
<svg class="b" style="left:1724.800px;top:203px" width="24" height="24" viewBox="0 0 24 24" fill="none" stroke="#262626" stroke-width="3.400" stroke-linecap="round"><path d="M1.700 1.700L22.300 22.300M22.300 1.700L1.700 22.300"/></svg>
<div class="t " style="left:824px;top:289.0px;height:34px;line-height:34px;font-size:26px;color:#262626;letter-spacing:0.118px;">Название</div>
<div class="b" style="left:1178px;top:280px;width:544px;height:54px;border:2px solid #e4e4e4;border-radius:11px;background:#fff"></div>
<div class="t " style="left:1196px;top:289.0px;height:34px;line-height:34px;font-size:26px;color:#262626;letter-spacing:-0.108px;">Дата и время</div>
<div class="t " style="left:824px;top:376.0px;height:34px;line-height:34px;font-size:26px;color:#262626;letter-spacing:-0.172px;">Тип</div>
<div class="b" style="left:1178px;top:367px;width:238px;height:55px;border:2px solid #e4e4e4;border-radius:11px;background:#fff"></div>
<div class="t " style="left:1196px;top:377.0px;height:34px;line-height:34px;font-size:26px;color:#262626;letter-spacing:-0.142px;">Целое число</div>
<svg class="b" style="left:1371px;top:387px" width="24" height="16" viewBox="0 0 24 16" fill="none" stroke="#6f6f6f" stroke-width="3" stroke-linecap="round" stroke-linejoin="round"><path d="M2.500 3L12 12.500L21.500 3"/></svg>
<div class="b" style="left:803px;top:433px;width:636px;height:100px;border:5px solid #5282ff;border-radius:17px"></div>
<div class="t " style="left:824px;top:464.0px;height:34px;line-height:34px;font-size:26px;color:#262626;letter-spacing:0.541px;">Группировка</div>
<div class="b" style="left:1178px;top:455px;width:129px;height:55px;border:2px solid #e4e4e4;border-radius:11px;background:#fff"></div>
<div class="t " style="left:1196px;top:465.0px;height:34px;line-height:34px;font-size:26px;color:#262626;letter-spacing:-0.891px;">Час</div>
<svg class="b" style="left:1260px;top:475px" width="24" height="16" viewBox="0 0 24 16" fill="none" stroke="#6f6f6f" stroke-width="3" stroke-linecap="round" stroke-linejoin="round"><path d="M2.500 3L12 12.500L21.500 3"/></svg>
<div class="t " style="left:824px;top:552.0px;height:34px;line-height:34px;font-size:26px;color:#262626;letter-spacing:0.676px;">Агрегация</div>
<div class="b" style="left:1178px;top:543px;width:129px;height:55px;border:2px solid #e4e4e4;border-radius:11px;background:#fff"></div>
<div class="t " style="left:1196px;top:553.0px;height:34px;line-height:34px;font-size:26px;color:#262626;letter-spacing:-0.141px;">Нет</div>
<svg class="b" style="left:1261px;top:563px" width="24" height="16" viewBox="0 0 24 16" fill="none" stroke="#6f6f6f" stroke-width="3" stroke-linecap="round" stroke-linejoin="round"><path d="M2.500 3L12 12.500L21.500 3"/></svg>
<div class="t " style="left:824px;top:640.0px;height:34px;line-height:34px;font-size:26px;color:#262626;letter-spacing:0.734px;">Формат</div>
<div class="b" style="left:1178px;top:631px;width:284px;height:56px;background:#f2f2f2;border-radius:11px"></div>
<div class="b" style="left:1184px;top:637px;width:115px;height:43px;background:#fff;border-radius:8px"></div>
<div class="t " style="left:1205px;top:641.0px;height:34px;line-height:34px;font-size:26px;color:#262626;letter-spacing:-0.195px;">Число</div>
<div class="t " style="left:1332px;top:641.0px;height:34px;line-height:34px;font-size:26px;color:#4d4d4d;letter-spacing:0.182px;">Процент</div>
<div class="t " style="left:824px;top:718.0px;height:34px;line-height:34px;font-size:26px;color:#262626;letter-spacing:0.281px;">Отображать группы</div>
<div class="t " style="left:824px;top:755.0px;height:34px;line-height:34px;font-size:26px;color:#262626;letter-spacing:0.257px;">разрядов</div>
<div class="b" style="left:1178px;top:726px;width:390px;height:56px;background:#f2f2f2;border-radius:11px"></div>
<div class="b" style="left:1184px;top:733px;width:237px;height:43px;background:#fff;border-radius:8px"></div>
<div class="t " style="left:1204px;top:737.0px;height:34px;line-height:34px;font-size:26px;color:#262626;letter-spacing:-0.087px;">С разделителем</div>
<div class="t " style="left:1453px;top:737.0px;height:34px;line-height:34px;font-size:26px;color:#4d4d4d;letter-spacing:-0.041px;">Слитно</div>
<div class="t " style="left:824px;top:832.0px;height:34px;line-height:34px;font-size:26px;color:#262626;letter-spacing:-0.031px;">Префикс</div>
<div class="b" style="left:1178px;top:823px;width:544px;height:55px;border:2px solid #e4e4e4;border-radius:11px;background:#fff"></div>
<div class="t " style="left:824px;top:920.0px;height:34px;line-height:34px;font-size:26px;color:#262626;letter-spacing:-0.092px;">Постфикс</div>
<div class="b" style="left:1178px;top:910px;width:544px;height:55px;border:2px solid #e4e4e4;border-radius:11px;background:#fff"></div>
<div class="t " style="left:824px;top:1006.0px;height:34px;line-height:34px;font-size:26px;color:#262626;letter-spacing:0.139px;">Размерность</div>
<div class="b" style="left:1178px;top:997px;width:544px;height:55px;border:2px solid #e4e4e4;border-radius:11px;background:#fff"></div>
<div class="t " style="left:1196px;top:1008.0px;height:34px;line-height:34px;font-size:26px;color:#262626;letter-spacing:-0.141px;">Нет</div>
<svg class="b" style="left:1676px;top:1018px" width="24" height="16" viewBox="0 0 24 16" fill="none" stroke="#6f6f6f" stroke-width="3" stroke-linecap="round" stroke-linejoin="round"><path d="M2.500 3L12 12.500L21.500 3"/></svg>
<div class="t " style="left:1272px;top:1180.0px;height:34px;line-height:34px;font-size:26px;color:#262626;letter-spacing:0.172px;">Отменить</div>
<div class="b" style="left:1480px;top:1162px;width:256px;height:71px;background:#5282ff;border-radius:16px"></div>
<div class="t " style="left:1539px;top:1180.0px;height:34px;line-height:34px;font-size:26px;color:#fff;letter-spacing:0.457px;font-weight:400;-webkit-text-stroke:.5px #fff;">Применить</div>
</div></div></body></html>
